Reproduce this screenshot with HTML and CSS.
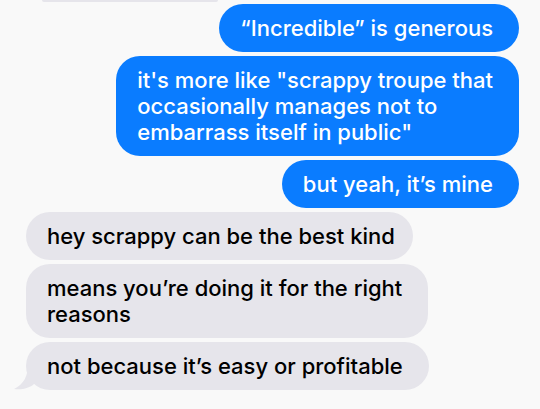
FILE: index.html
```html
<!DOCTYPE html>
<html lang="en">
<head>
  <meta charset="UTF-8">
  <title>Messages</title>
  <link rel="stylesheet" href="styles.css">
</head>
<body>

<div class="thread">
  <div class="prev-edge"></div>

  <div class="group sent">
    <div class="bubble">“Incredible” is generous</div>
    <div class="bubble">it's more like "scrappy troupe that<br>occasionally manages not to<br>embarrass itself in public"</div>
    <div class="bubble">but yeah, it’s mine</div>
  </div>

  <div class="group received">
    <div class="bubble short">hey scrappy can be the best kind</div>
    <div class="bubble">means you’re doing it for the right<br>reasons</div>
    <div class="bubble last">
      not because it’s easy or profitable
      <svg class="tail" width="20" height="26" viewBox="0 0 20 26">
        <path d="M14 0 C14 12 10 20 0 25 C8 26 16 24 20 20 L20 0 Z" fill="#e6e5eb"/>
      </svg>
    </div>
  </div>
</div>

</body>
</html>
```

FILE: styles.css
```css
body {
  margin: 0;
  background-color: #f9f9f9;
  font-family: Inter, "Noto Sans", sans-serif;
}

.thread {
  padding: 0 21px 0 26px;
}

.prev-edge {
  height: 2px;
  width: 176px;
  margin-left: 16px;
  background-color: #e6e5eb;
  border-radius: 0 0 2px 2px;
}

.group {
  display: flex;
  flex-direction: column;
  gap: 4px;
  margin-top: 2px;
}

.sent {
  align-items: flex-end;
}

.received {
  align-items: flex-start;
  margin-top: 4px;
}

.bubble {
  position: relative;
  padding: 11px 26px 11px 21px;
  border-radius: 24px;
  font-size: 22px;
  font-weight: 500;
  line-height: 26px;
}

.sent .bubble {
  background-color: #0a7cff;
  color: #fff;
}

.received .bubble {
  background-color: #e6e5eb;
  color: #000;
}

.received .short {
  padding-right: 18px;
}

.tail {
  position: absolute;
  left: -12px;
  bottom: 0;
}
```
